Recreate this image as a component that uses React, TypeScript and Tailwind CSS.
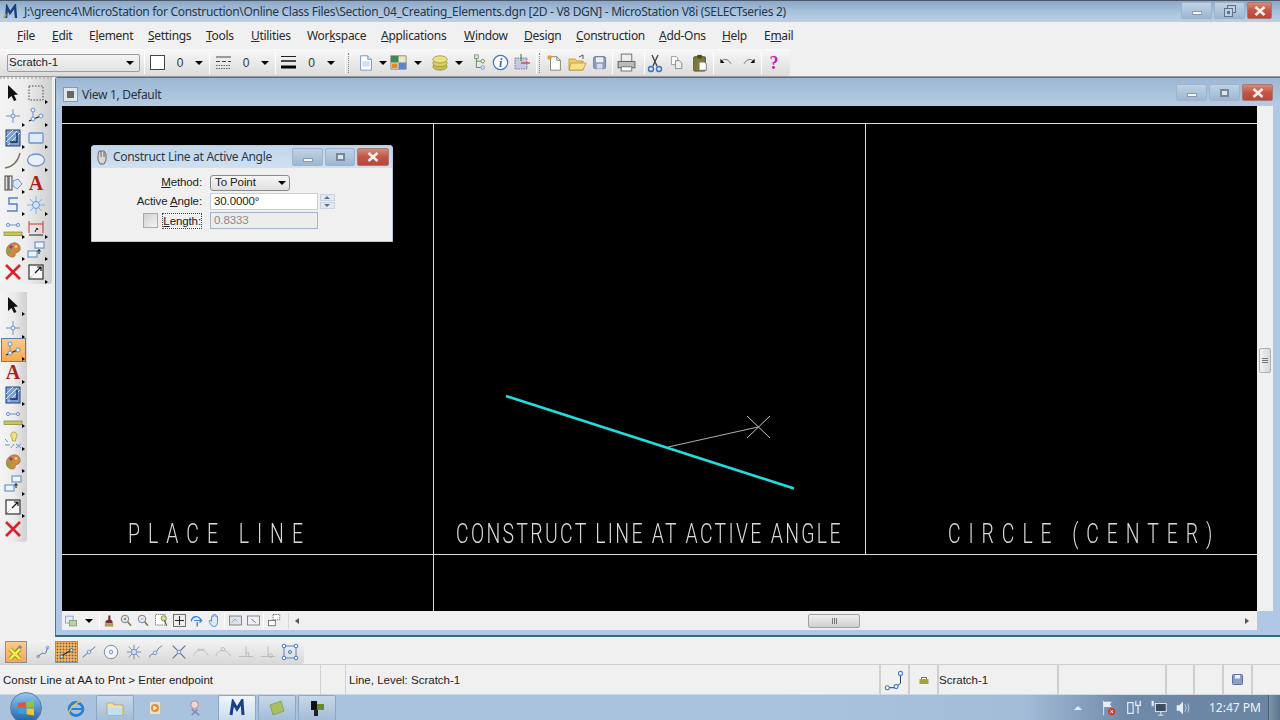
import React from "react";

const S = ({ s = 20, children }: { s?: number; children?: React.ReactNode }) => (
  <svg width={s} height={s} viewBox="0 0 20 20" fill="none" className="block shrink-0">{children}</svg>
);
const B = "#6f93c8";
const Tri = () => <span className="absolute right-0 bottom-0 w-0 h-0 border-l-[3px] border-l-black border-y-[2.5px] border-y-transparent" />;
const Down = () => <span className="w-0 h-0 border-x-[4px] border-x-transparent border-t-[4px] border-t-black" />;

const Arrow = () => <S><path d="M5 2L5 16L8.5 13L11 18L13.5 17L11 12L15 11.5Z" fill="#111" /></S>;
const Marquee = () => <S><rect x="3" y="3" width="14" height="14" stroke="#444" strokeDasharray="1.5 1.5" /></S>;
const Cross = () => <S><path d="M10 3V17M3 10H17" stroke={B} /><circle cx="10" cy="10" r="2" fill="#e6effa" stroke={B} /></S>;
const PlaceLine = () => <S><path d="M3 15L17 9" stroke="#222" strokeWidth="1.3" /><path d="M7 5V13" stroke={B} /><circle cx="7" cy="4" r="2" fill="#e8f0fa" stroke={B} /><circle cx="7" cy="13" r="2" fill="#e8f0fa" stroke={B} /><circle cx="15" cy="10" r="2" fill="#e8f0fa" stroke={B} /></S>;
const Hatch = () => <S><rect x="3" y="2" width="14" height="16" fill="#7aa0d4" stroke="#22407a" /><path d="M3 9L10 2M3 14L14 3M5 17L17 5" stroke="#dbe8f8" /><path d="M7 14H14V5" stroke="#15264a" strokeWidth="1.3" /></S>;
const RectI = () => <S><rect x="3" y="5" width="14" height="10" rx="1" fill="#dfeafa" stroke={B} strokeWidth="1.3" /></S>;
const ArcI = () => <S><path d="M2 18Q14 16 17 3" stroke="#7a6f5c" strokeWidth="1.3" /></S>;
const EllI = () => <S><ellipse cx="10" cy="10" rx="8.5" ry="6" fill="#e8f0fb" stroke={B} strokeWidth="1.3" /></S>;
const CellI = () => <S><rect x="2" y="3" width="3" height="14" fill="#ddd" stroke="#444" /><rect x="6" y="3" width="3" height="14" fill="#eee" stroke="#444" /><path d="M10 8L15 6L19 11L14 16L10 13Z" fill="#dbe8f8" stroke={B} /></S>;
const AI = () => <svg width="20" height="20" viewBox="0 0 20 20" className="block shrink-0"><text x="10" y="17" textAnchor="middle" fontFamily="Liberation Serif" fontWeight="700" fontSize="20" fill="#ab1f22">A</text></svg>;
const CurveI = () => <S><path d="M15 3H6V9H14V16H4" stroke="#4d82c4" strokeWidth="1.4" /></S>;
const Star = () => <S><path d="M10 1V19M1 10H19M4 4L16 16M16 4L4 16" stroke="#7fb4ea" /><circle cx="10" cy="10" r="3.5" fill="#cfe4fb" stroke={B} /></S>;
const Measure = () => <S><circle cx="5" cy="7" r="1.6" stroke={B} /><circle cx="15" cy="7" r="1.6" stroke={B} /><path d="M7 7H13" stroke={B} /><rect x="1" y="14" width="18" height="3.5" fill="#c9c65a" stroke="#77742a" strokeWidth=".6" /></S>;
const Dim = () => <S><path d="M3 3V15M17 3V15M3 6H17" stroke="#c33" /><path d="M3 17H17" stroke="#222" /><path d="M9 14L11 10L12 12" stroke="#111" /></S>;
const Palette = () => <S><path d="M10 3C15 2 18 6 17 10C16 13 12 12 12 14C13 17 9 18 6 16C2 14 2 5 10 3Z" fill="#d3883c" stroke="#8a5a22" strokeWidth=".6" /><circle cx="8" cy="7" r="1.7" fill="#7a4a9a" /><circle cx="6.5" cy="12" r="2" fill="#6fb13f" /><circle cx="13" cy="6.5" r="1.3" fill="#f2d9a0" /></S>;
const Windows = () => <S><rect x="9" y="2" width="9" height="6" fill="#eef4fc" stroke={B} strokeWidth="1.2" /><rect x="2" y="11" width="9" height="6" fill="#eef4fc" stroke={B} strokeWidth="1.2" /><path d="M13 14V10M11.5 11.5L13 9.5L14.5 11.5" stroke="#111" /></S>;
const RedX = () => <S><path d="M3 3L17 17M17 3L3 17" stroke="#d6222c" strokeWidth="2.6" /></S>;
const Fit = () => <S><rect x="3" y="3" width="14" height="14" fill="#f8f8f8" stroke="#333" strokeWidth="1.2" /><path d="M4 16L8 12" stroke="#6f93c8" strokeDasharray="1 1" /><path d="M9 11L15 5M11 5H15V9" stroke="#111" strokeWidth="1.2" /></S>;
const Lamp = () => <S><path d="M10 2a3.5 3.5 0 0 1 3 6L12.500 11H9.500L9 8A3.500 3.500 0 0 1 10 2Z" fill="#f2e27a" stroke="#9a8a30" strokeWidth=".7" /><path d="M2 9L5 12M2 15H7M8 18L11 14M13 14L18 18M18 14L13 18" stroke={B} /></S>;

const Tool = ({ children, tri = true, active = false }: { children: React.ReactNode; tri?: boolean; active?: boolean }) => (
  <div className={"relative w-[23px] h-[22.400px] flex items-center justify-center " + (active ? "bg-gradient-to-b from-[#fcc98a] to-[#f6a94e] outline outline-1 outline-[#5c7ea8]" : "")}>
    {children}
    {tri && <Tri />}
  </div>
);

const WinBtn = ({ kind, w, h, restore }: { kind: "min" | "max" | "close"; w: string; h: string; restore?: boolean }) => (
  <div className={`${w} ${h} rounded-[2px] flex items-center justify-center border ${kind === "close" ? "border-[#a87a72] bg-gradient-to-b from-[#d58a7a] via-[#c25546] to-[#b8483a]" : "border-[#9fb4ca] bg-gradient-to-b from-[#c0d2e5] via-[#aec5dc] to-[#9db7d2]"}`}>
    {kind === "min" && <span className="w-[10px] h-[4px] mt-[5px] bg-[#f4f6f9] border border-[#8c9bac]" />}
    {kind === "close" && <svg width="12" height="10" viewBox="0 0 12 10"><path d="M1.500 1L10.500 9M10.500 1L1.500 9" stroke="#f5eeea" strokeWidth="2.600" /></svg>}
    {kind === "max" && !restore && <span className="w-[9px] h-[8px] border-2 border-[#76879a] bg-[#dbe6f1]" />}
    {kind === "max" && restore && <svg width="12" height="12" viewBox="0 0 12 12"><rect x="3.500" y=".5" width="8" height="7" fill="#bdd0e3" stroke="#5f7388" /><rect x=".5" y="3.500" width="8" height="8" fill="#bdd0e3" stroke="#5f7388" /><rect x="3" y="6" width="3" height="3" fill="#5f7388" /></svg>}
  </div>
);

const menu: [React.ReactNode, string][] = [
  [<><u>F</u>ile</>, "w-[35px]"],
  [<><u>E</u>dit</>, "w-[37px]"],
  [<>E<u>l</u>ement</>, "w-[59px]"],
  [<><u>S</u>ettings</>, "w-[58px]"],
  [<><u>T</u>ools</>, "w-[45px]"],
  [<><u>U</u>tilities</>, "w-[56px]"],
  [<>Wor<u>k</u>space</>, "w-[74px]"],
  [<><u>A</u>pplications</>, "w-[83px]"],
  [<><u>W</u>indow</>, "w-[60px]"],
  [<><u>D</u>esign</>, "w-[52px]"],
  [<><u>C</u>onstruction</>, "w-[83px]"],
  [<><u>A</u>dd-Ons</>, "w-[63px]"],
  [<><u>H</u>elp</>, "w-[42px]"],
  [<>E<u>m</u>ail</>, "w-[40px]"],
];

const Sep = ({ cls = "" }: { cls?: string }) => <span className={"w-px h-[22px] bg-[#c4c4c4] border-r border-white shrink-0 " + cls} />;
const Zero = ({ w }: { w: string }) => <span className={`${w} text-center text-[12px] text-[#333] font-['Liberation_Sans',sans-serif]`}>0</span>;

const Bar = ({ cls, children }: { cls: string; children?: React.ReactNode }) => (
  <div className={`${cls} flex items-center justify-center shrink-0`}>{children}</div>
);

const DocI = () => <S s={18}><path d="M4 2H12L16 6V18H4Z" fill="#fff" stroke="#6f8fc0" /><path d="M12 2V6H16" stroke="#6f8fc0" fill="#dbe8f8" /><rect x="6" y="8" width="8" height="6" fill="#cfe0f6" /></S>;
const ModelI = () => <S s={19}><rect x="2" y="3" width="16" height="14" fill="#e9e5c8" stroke="#666" strokeWidth=".7" /><rect x="2" y="3" width="8" height="7" fill="#3f8a50" /><rect x="10" y="10" width="8" height="7" fill="#5b86c8" /><rect x="3" y="11" width="6" height="5" fill="#e08a2e" /></S>;
const Layers = () => <S s={18}><ellipse cx="10" cy="14" rx="8" ry="4" fill="#c9bd4c" stroke="#8d8230" strokeWidth=".7" /><ellipse cx="10" cy="10" rx="8" ry="4" fill="#dcd066" stroke="#8d8230" strokeWidth=".7" /><ellipse cx="10" cy="6" rx="8" ry="4" fill="#ebe184" stroke="#8d8230" strokeWidth=".7" /></S>;
const Tree = () => <S s={18}><path d="M6 3V15H12M6 8H12" stroke="#5a7a5a" /><rect x="4" y="1" width="4" height="4" fill="#dce8c8" stroke="#5a7a5a" strokeWidth=".7" /><circle cx="13" cy="8" r="2" fill="#e8f0d0" stroke="#6c8c4c" /><circle cx="13" cy="15" r="2" fill="#d6e4f6" stroke={B} /></S>;
const Info = () => <svg width="17" height="17" viewBox="0 0 19 19" className="block shrink-0"><circle cx="9.500" cy="9.500" r="8" fill="#fff" stroke="#3f74cf" strokeWidth="1.400" /><text x="9.500" y="14" textAnchor="middle" fontFamily="Liberation Serif" fontStyle="italic" fontWeight="700" fontSize="13" fill="#2a62c8">i</text></svg>;
const Aim = () => <S s={20}><rect x="4" y="5" width="12" height="11" fill="#c5c8e0" stroke="#77799c" strokeDasharray="1.500 1" /><path d="M10 1V8" stroke="#2fa04a" strokeWidth="1.200" /><path d="M10 10H19" stroke="#d42c2c" strokeWidth="1.200" /></S>;
const NewI = () => <S s={18}><path d="M5 3H12L16 7V18H5Z" fill="#fff" stroke="#7a7a6c" /><path d="M12 3V7H16" stroke="#7a7a6c" /><circle cx="4" cy="4" r="2.500" fill="#e89a3c" /></S>;
const Folder = () => <S s={20}><path d="M2 6H8L10 8H16V17H2Z" fill="#f1cd5c" stroke="#b08a26" strokeWidth=".7" /><path d="M4 10H19L16 17H2Z" fill="#f8e08a" stroke="#b08a26" strokeWidth=".7" /><path d="M12 4L16 2V6" stroke="#555" /></S>;
const Save = () => <S s={16}><rect x="2" y="2" width="15" height="15" rx="2" fill="#8d9dc4" stroke="#5f6f98" /><rect x="5" y="3" width="9" height="6" fill="#eef1f8" /><rect x="6" y="11" width="7" height="6" fill="#d6dbe8" /></S>;
const Printer = () => <S s={21}><rect x="5" y="2" width="10" height="7" fill="#eee" stroke="#777" /><path d="M2 9H18V15H2Z" fill="#bbb" stroke="#666" /><path d="M5 14H15V18H5Z" fill="#fff" stroke="#777" /></S>;
const Scissors = () => <S s={20}><path d="M7 2L12 13M13 2L8 13" stroke="#3e3e3e" strokeWidth="1.300" /><circle cx="6" cy="16" r="2.500" stroke="#3f6fc0" strokeWidth="1.400" /><circle cx="14" cy="16" r="2.500" stroke="#3f6fc0" strokeWidth="1.400" /></S>;
const Copy = () => <S s={16}><path d="M3 2H9L11 4V12H3Z" fill="#fff" stroke="#888" /><path d="M8 7H13L16 10V17H8Z" fill="#eee" stroke="#777" /></S>;
const Paste = () => <S s={18}><rect x="3" y="3" width="13" height="16" rx="1" fill="#7d7a3a" stroke="#50501e" /><rect x="7" y="1" width="5" height="4" fill="#4a4a22" /><path d="M9 9H15L17 11V18H9Z" fill="#fff" stroke="#777" /></S>;
const Undo = () => <S s={14}><path d="M3 8C7 3 13 4 17 11" stroke="#666" strokeWidth="1.300" /><path d="M2 4V10H8Z" fill="#111" /></S>;
const Redo = () => <S s={14}><path d="M17 8C13 3 7 4 3 11" stroke="#666" strokeWidth="1.300" /><path d="M18 4V10H12Z" fill="#111" /></S>;

const viewTools = [
  <S s={14} key="a"><path d="M9 2L12 2L12 8L15 10V13H5V10L9 8Z" fill="#7a2a3a" /><rect x="4" y="13" width="12" height="5" fill="#b59a5a" /></S>,
  <S s={15} key="b"><circle cx="8" cy="8" r="5" fill="#dce8d8" stroke="#6a7f9a" strokeWidth="1.300" /><path d="M11.500 11.500L16 17" stroke="#8a6a30" strokeWidth="2" /><circle cx="8" cy="8" r="1.500" fill="#c66" /></S>,
  <S s={15} key="c"><circle cx="8" cy="8" r="5" fill="#e8eef2" stroke="#6a7f9a" strokeWidth="1.300" /><path d="M11.500 11.500L16 17" stroke="#8a6a30" strokeWidth="2" /><path d="M6 8H10" stroke="#c66" /></S>,
  <S s={15} key="d"><rect x="2" y="2" width="13" height="14" fill="#fff" stroke="#555" strokeDasharray="2 1" /><circle cx="13" cy="7" r="3.500" fill="#dcd6a0" stroke="#6a7f3a" /><path d="M14 10L17 17" stroke="#6a5a30" strokeWidth="1.500" /></S>,
  <S s={15} key="e"><rect x="2" y="2" width="16" height="16" fill="#eee" stroke="#555" strokeWidth="1.100" /><path d="M10 4V16M4 10H16" stroke="#222" strokeWidth="1.300" /></S>,
  <S s={15} key="f"><path d="M3 11C4 4 12 3 15 8" stroke="#2f86d8" strokeWidth="1.800" /><path d="M7 10H17M14 7L17 10L14 13" stroke="#2f86d8" strokeWidth="1.600" /><path d="M11 12V18" stroke="#2f86d8" strokeWidth="1.800" /></S>,
  <S s={15} key="g"><path d="M6 11V5a1 1 0 0 1 2 0V3a1 1 0 0 1 2 0V3a1 1 0 0 1 2 0V5a1 1 0 0 1 2 0V13C14 17 11 18 9 18C6 18 4 14 3 11C3 9 5 9 6 11Z" fill="#dceafa" stroke="#2f6fc4" /></S>,
];

const snapIcons = [
  <S s={18} key="1"><path d="M3 15L7 12C9 10 10 13 12 11L14 5" stroke="#5a6f9a" strokeWidth="1.100" /><circle cx="3.500" cy="15" r="1.500" stroke={B} /><circle cx="14" cy="5" r="1.500" stroke={B} /></S>,
  null,
  <S s={18} key="3"><path d="M3 16L17 4" stroke="#5a6f9a" strokeWidth="1.100" /><circle cx="10" cy="10" r="2" fill="#dfeafa" stroke={B} /></S>,
  <S s={18} key="4"><circle cx="10" cy="10" r="7.500" fill="#f4f4f4" stroke="#6f7f9c" /><circle cx="10" cy="10" r="2" fill="#dfeafa" stroke={B} /></S>,
  <S s={18} key="5"><path d="M10 2V18M2 10H18M4 4L16 16M16 4L4 16" stroke="#7d8898" /><circle cx="10" cy="10" r="3" fill="#cfe0f5" stroke={B} /></S>,
  <S s={18} key="6"><path d="M3 16C3 11 8 14 11 9C12 6 15 4 17 3" stroke="#6a7a96" strokeWidth="1.100" /><circle cx="9" cy="11" r="2" fill="#dfeafa" stroke={B} /></S>,
  <S s={18} key="7"><path d="M3 3L17 17M17 3L3 17" stroke="#5a6f8a" strokeWidth="1.200" /><circle cx="10" cy="10" r="2" fill="#dfeafa" stroke={B} /></S>,
  <S s={18} key="8"><path d="M2 14C4 6 15 6 18 14" stroke="#b4b8bc" /><path d="M6 7H14" stroke="#b4b8bc" /></S>,
  <S s={18} key="9"><path d="M2 15C4 6 15 6 18 15" stroke="#b4b8bc" /><circle cx="10" cy="7" r="2" stroke="#b4b8bc" /></S>,
  <S s={18} key="10"><path d="M10 4V15M2 15H18" stroke="#b4b8bc" /><path d="M10 11H13V15" stroke="#b4b8bc" /></S>,
  <S s={18} key="11"><path d="M10 4V15M2 15H18" stroke="#b4b8bc" /><circle cx="13" cy="14" r="2" stroke="#b4b8bc" /></S>,
  <S s={20} key="12"><rect x="4" y="4" width="12" height="12" stroke="#5a84c0" /><circle cx="4" cy="4" r="1.800" fill="#fff" stroke="#3f78c4" /><circle cx="16" cy="4" r="1.800" fill="#fff" stroke="#3f78c4" /><circle cx="4" cy="16" r="1.800" fill="#fff" stroke="#3f78c4" /><circle cx="16" cy="16" r="1.800" fill="#fff" stroke="#3f78c4" /><circle cx="10" cy="10" r="1.500" stroke="#3f78c4" /></S>,
];

const Caption = ({ x, y, w, children }: { x: number; y: number; w: number; children: string }) => (
  <text x={x} y={y} textLength={w} lengthAdjust="spacing" fontFamily="Roboto" fontWeight="300" fontSize="27" fill="#dcdcdc" transform={`translate(${x} ${y}) scale(.72 1) translate(${-x} ${-y})`}>{children}</text>
);

const TaskBtn = ({ active, children }: { active?: boolean; children: React.ReactNode }) => (
  <div className={`w-[38px] h-[26px] shrink-0 flex items-center justify-center rounded-[2px] border border-[#8ba6c2] ${active ? "bg-gradient-to-b from-[#eff5fb] to-[#cbdced]" : "bg-gradient-to-b from-[#c6d8ea] to-[#a3bdd8]"}`}>{children}</div>
);

export default function App() {
  return (
    <div className="w-[1280px] h-[720px] overflow-hidden flex flex-col bg-[#f0f0f0] font-['Noto_Sans',sans-serif] text-[#222]">
      {/* title bar */}
      <div className="h-[22px] shrink-0 flex items-center bg-gradient-to-b from-[#8da8c6] via-[#a8c2dd] to-[#bad0e7] border-t border-[#4a5a6c] pl-[3px] pr-[8px]">
        <svg width="18" height="16" viewBox="0 0 18 16" className="shrink-0"><path d="M3 14L4 3L7 9L12 2L13 14" stroke="#1c3f7a" strokeWidth="2.400" fill="none" /><path d="M1 14L3 10" stroke="#b8a030" strokeWidth="2" /></svg>
        <span className="ml-[3px] text-[12px] tracking-[-0.31px] leading-none text-[#263647] whitespace-nowrap">J:\greenc4\MicroStation for Construction\Online Class Files\Section_04_Creating_Elements.dgn [2D - V8 DGN] - MicroStation V8i (SELECTseries 2)</span>
        <div className="ml-auto flex items-center gap-[2px] pb-[2px]">
          <WinBtn kind="min" w="w-[31px]" h="h-[17px]" />
          <WinBtn kind="max" restore w="w-[31px]" h="h-[17px]" />
          <WinBtn kind="close" w="w-[25px]" h="h-[17px]" />
        </div>
      </div>
      {/* menu */}
      <div className="h-[27px] shrink-0 flex items-center pl-[17px] text-[12px] tracking-[-0.3px] text-[#2a2a2a]">
        {menu.map(([t, w], i) => <span key={i} className={`${w} shrink-0 whitespace-nowrap`}>{t}</span>)}
      </div>
      {/* toolbar */}
      <div className="h-[28px] shrink-0 border-b border-[#9a9a9a]">
        <div className="w-[790px] h-[27px] flex items-center pl-[7px] bg-gradient-to-b from-[#f8f8f8] to-[#dcdcdc] rounded-br-[3px]">
          <div className="w-[133px] h-[18px] shrink-0 flex items-center justify-between px-[1px] pr-[5px] bg-gradient-to-b from-[#f4f4f4] to-[#e2e2e2] border border-[#9c9c9c] rounded-[2px] text-[11.500px] font-['Liberation_Sans',sans-serif]"><span>Scratch-1</span><Down /></div>
          <Sep cls="ml-[4px]" />
          <span className="ml-[5px] w-[15px] h-[15px] shrink-0 bg-white border border-[#444]" />
          <Zero w="w-[30px]" />
          <Down />
          <Sep cls="ml-[6px]" />
          <Bar cls="w-[16px] ml-[5px]"><svg width="15" height="15" viewBox="0 0 15 15"><path d="M0 2H15M0 6.500H4M6 6.500H10M12 6.500H15" stroke="#444" /><path d="M0 10.500H15M0 13.500H15" stroke="#666" strokeDasharray="1.500 1" /></svg></Bar>
          <Zero w="w-[30px]" />
          <Down />
          <Sep cls="ml-[6px]" />
          <Bar cls="w-[15px] ml-[5px]"><svg width="15" height="15" viewBox="0 0 15 15"><path d="M0 1.500H15" stroke="#222" /><path d="M0 6H15" stroke="#111" strokeWidth="1.500" /><path d="M0 12H15" stroke="#000" strokeWidth="3" /></svg></Bar>
          <Zero w="w-[31px]" />
          <Down />
          <Sep cls="ml-[10px]" />
          <span className="ml-[2px] h-[20px] w-0 border-l border-dotted border-[#888]" />
          <Bar cls="w-[24px] ml-[5px]"><DocI /></Bar>
          <Bar cls="w-[9px]"><Down /></Bar>
          <Bar cls="w-[22px]"><ModelI /></Bar>
          <Bar cls="w-[10px] ml-[4px] mr-[5px]"><Down /></Bar>
          <Bar cls="w-[24px]"><Layers /></Bar>
          <Bar cls="w-[10px] ml-[2px] mr-[4px]"><Down /></Bar>
          <Bar cls="w-[22px] ml-[1px]"><Tree /></Bar>
          <Bar cls="w-[19px]"><Info /></Bar>
          <Bar cls="w-[21px]"><Aim /></Bar>
          <Sep cls="ml-[5px]" />
          <span className="ml-[2px] h-[20px] w-0 border-l border-dotted border-[#888]" />
          <Bar cls="w-[22px] ml-[4px]"><NewI /></Bar>
          <Bar cls="w-[22px]"><Folder /></Bar>
          <Bar cls="w-[23px]"><Save /></Bar>
          <Sep cls="ml-[1px]" />
          <Bar cls="w-[25px] ml-[1px]"><Printer /></Bar>
          <Sep cls="ml-[5px]" />
          <Bar cls="w-[20px]"><Scissors /></Bar>
          <Bar cls="w-[23px]"><Copy /></Bar>
          <Bar cls="w-[23px]"><Paste /></Bar>
          <Sep cls="ml-[2px]" />
          <Bar cls="w-[23px]"><Undo /></Bar>
          <Bar cls="w-[23px]"><Redo /></Bar>
          <Sep cls="ml-[1px]" />
          <Bar cls="w-[24px]"><span className="text-[18px] font-bold leading-none text-[#c41fb8] font-['Liberation_Serif',serif]">?</span></Bar>
        </div>
      </div>
      {/* main */}
      <div className="h-[563px] shrink-0 flex">
        <div className="w-[55px] shrink-0 flex flex-col">
          <div className="w-[52px] h-[207px] pt-[3px] pl-[1.500px] bg-gradient-to-r from-[#f4f4f4] via-[#ececec] to-[#cfcfcf] rounded-br-[3px] border-t-2 border-dotted border-t-[#c0c0c0]">
            <div className="grid grid-cols-[23px_23px]">
              <Tool tri={false}><Arrow /></Tool><Tool><Marquee /></Tool>
              <Tool><Cross /></Tool><Tool><PlaceLine /></Tool>
              <Tool><Hatch /></Tool><Tool><RectI /></Tool>
              <Tool><ArcI /></Tool><Tool><EllI /></Tool>
              <Tool><CellI /></Tool><Tool tri={false}><AI /></Tool>
              <Tool><CurveI /></Tool><Tool><Star /></Tool>
              <Tool><Measure /></Tool><Tool><Dim /></Tool>
              <Tool><Palette /></Tool><Tool><Windows /></Tool>
              <Tool tri={false}><RedX /></Tool><Tool><Fit /></Tool>
            </div>
          </div>
          <div className="w-[27px] h-[250px] mt-[8px] pt-[2px] pl-[1.500px] bg-gradient-to-r from-[#f4f4f4] via-[#ececec] to-[#cfcfcf] rounded-br-[3px]">
            <Tool><Arrow /></Tool>
            <Tool><Cross /></Tool>
            <Tool active><PlaceLine /></Tool>
            <Tool><AI /></Tool>
            <Tool><Hatch /></Tool>
            <Tool><Measure /></Tool>
            <Tool><Lamp /></Tool>
            <Tool><Palette /></Tool>
            <Tool><Windows /></Tool>
            <Tool><Fit /></Tool>
            <Tool tri={false}><RedX /></Tool>
          </div>
        </div>
        {/* view window */}
        <div className="flex-1 h-[560px] flex flex-col border-l border-t border-[#5f6b78] border-b-2 border-b-[#2f6f78] rounded-tl-[3px] bg-gradient-to-b from-[#a3bcd8] to-[#b4cde9]">
          <div className="h-[28px] shrink-0 flex items-center pl-[8px] pr-[7px] pt-[5px] bg-gradient-to-b from-[#9db7d4] to-[#b5cbe2]">
            <span className="w-[13px] h-[13px] shrink-0 bg-[#666] border-[3px] border-[#dfe6ee] outline outline-1 outline-[#8a97a6]" />
            <span className="ml-[5px] text-[12px] tracking-[-0.3px] leading-none text-[#26333f]">View 1, Default</span>
            <div className="ml-auto flex items-center gap-[2px] pb-[4px]">
              <WinBtn kind="min" w="w-[31px]" h="h-[17px]" />
              <WinBtn kind="max" w="w-[31px]" h="h-[17px]" />
              <WinBtn kind="close" w="w-[31px]" h="h-[17px]" />
            </div>
          </div>
          <div className="flex-1 flex flex-col pl-[6px] pr-[7px] pb-[5px] bg-[#aec8e5]">
            <div className="h-[505px] shrink-0 flex">
              <div className="relative w-[1195px] h-[505px] bg-black overflow-hidden shrink-0">
                <svg width="1195" height="505" viewBox="62 106 1195 505" className="absolute inset-0">
                  <path d="M62 123.500H1257M62 554.500H1257M433.500 123V611M865.500 123V554" stroke="#dcdcdc" strokeWidth="1" />
                  <path d="M506 396L794 488.500" stroke="#1fdede" strokeWidth="2.600" />
                  <path d="M668 447L758 427" stroke="#a8a8a8" strokeWidth="1.200" />
                  <path d="M747 416L770 438M770 416L747 438" stroke="#c8c8c8" strokeWidth="1" />
                  <g className="opacity-[.99]">
                    <Caption x={128} y={543} w={243}>PLACE LINE</Caption>
                    <Caption x={456} y={543} w={534}>CONSTRUCT LINE AT ACTIVE ANGLE</Caption>
                    <Caption x={948} y={543} w={367}>CIRCLE (CENTER)</Caption>
                  </g>
                </svg>
                {/* floating dialog */}
                <div className="absolute left-[29px] top-[39px] w-[302px] h-[97px] flex flex-col bg-[#f0f0f0] border border-[#b5cbe2] rounded-t-[3px] font-['Liberation_Sans',sans-serif] text-[11.500px] tracking-[-0.1px] text-[#222]">
                  <div className="h-[22px] shrink-0 flex items-center pl-[3px] pr-[2px] bg-gradient-to-b from-[#c2d6ea] to-[#cfe0f1]">
                    <svg width="14" height="16" viewBox="0 0 14 16" className="shrink-0"><path d="M4 2H9L11 5V11L9 15H5L3 11V6Z" fill="#d8d8d8" stroke="#666" /><path d="M6 2V8M9 3V8" stroke="#666" /></svg>
                    <span className="ml-[4px] text-[12px] tracking-[-0.3px] leading-none font-['Noto_Sans',sans-serif] text-[#2b3a48]">Construct Line at Active Angle</span>
                    <div className="ml-auto flex items-center gap-[2px] pr-[1px]">
                      <WinBtn kind="min" w="w-[31px]" h="h-[18px]" />
                      <WinBtn kind="max" w="w-[30px]" h="h-[18px]" />
                      <WinBtn kind="close" w="w-[32px]" h="h-[18px]" />
                    </div>
                  </div>
                  <div className="pt-[6px] flex flex-col gap-[2px]">
                    <div className="flex items-center h-[17px]">
                      <span className="w-[110px] text-right whitespace-nowrap"><u>M</u>ethod:</span>
                      <div className="ml-[8px] w-[80px] h-[16px] flex items-center justify-between pl-[4px] pr-[3px] bg-gradient-to-b from-[#f6f6f6] to-[#e0e0e0] border border-[#8a8a8a] rounded-[3px]"><span>To Point</span><Down /></div>
                    </div>
                    <div className="flex items-center h-[17px]">
                      <span className="w-[110px] text-right whitespace-nowrap">Active <u>A</u>ngle:</span>
                      <div className="ml-[8px] w-[108px] h-[17px] flex items-center pl-[3px] bg-white border border-[#c5cfdb]">30.0000°</div>
                      <div className="ml-[1px] w-[16px] h-[16px] flex flex-col gap-[1px] items-center justify-center">
                        <span className="w-[15px] h-[7px] flex items-center justify-center bg-[#e4e9f1] border border-[#ccd3dd]"><span className="w-0 h-0 border-x-[3px] border-x-transparent border-b-[3px] border-b-[#56739a]" /></span>
                        <span className="w-[15px] h-[7px] flex items-center justify-center bg-[#e4e9f1] border border-[#ccd3dd]"><span className="w-0 h-0 border-x-[3px] border-x-transparent border-t-[3px] border-t-[#56739a]" /></span>
                      </div>
                    </div>
                    <div className="flex items-center h-[17px]">
                      <div className="w-[110px] flex items-center justify-end">
                        <span className="w-[15px] h-[15px] mr-[4px] bg-gradient-to-br from-[#d0d0d0] to-[#f4f4f4] border border-[#a8a8a8]" />
                        <span className="border border-dotted border-[#444] leading-[14px]"><u>L</u>ength:</span>
                      </div>
                      <div className="ml-[8px] w-[108px] h-[17px] flex items-center pl-[3px] bg-[#ededed] border border-[#a6b4c6] text-[#8a8a8a]">0.8333</div>
                    </div>
                  </div>
                </div>
              </div>
              <div className="w-[16px] shrink-0 flex items-center justify-center bg-[#f0f0f0] pt-[3px]">
                <div className="w-[12px] h-[25px] flex flex-col items-center justify-center gap-[1px] bg-gradient-to-r from-[#f2f2f2] to-[#d8d8d8] border border-[#b0b0b0] rounded-[2px]">
                  <span className="w-[6px] h-px bg-[#777]" /><span className="w-[6px] h-px bg-[#777]" /><span className="w-[6px] h-px bg-[#777]" />
                </div>
              </div>
            </div>
            <div className="h-[19px] shrink-0 mr-[16px] flex items-center bg-[#f0f0f0] pl-[2px]">
              <Bar cls="w-[14px]"><S s={14}><rect x="2" y="3" width="11" height="10" fill="#e8eef6" stroke="#6f8fb0" /><rect x="8" y="9" width="10" height="8" fill="#bcd2a8" stroke="#6f8f60" /></S></Bar>
              <Bar cls="w-[18px] ml-[2px]"><Down /></Bar>
              <Sep cls="!h-[16px] ml-[1px]" />
              {viewTools.map((v, i) => <Bar key={i} cls="w-[17.600px]">{v}</Bar>)}
              <Sep cls="!h-[16px] ml-[1px]" />
              <Bar cls="w-[18px] ml-[1px]"><S s={15}><rect x="2" y="4" width="16" height="12" fill="#dde3ea" stroke="#666" /><path d="M5 13L9 8L12 11" stroke="#888" /></S></Bar>
              <Bar cls="w-[18px]"><S s={15}><rect x="2" y="4" width="16" height="12" fill="#eef0f3" stroke="#666" /><path d="M7 8L13 13" stroke="#555" /></S></Bar>
              <Sep cls="!h-[16px] ml-[1px]" />
              <Bar cls="w-[21px]"><S s={15}><rect x="8" y="2" width="9" height="7" stroke="#555" strokeDasharray="2 1" fill="#fff" /><rect x="2" y="10" width="9" height="7" stroke="#555" fill="#fff" /></S></Bar>
              <span className="ml-[3px] h-[16px] w-px bg-[#d8d8d8]" />
              <Bar cls="w-[16px]"><span className="w-0 h-0 border-y-[3px] border-y-transparent border-r-[4px] border-r-[#555]" /></Bar>
              <div className="ml-[503px] w-[52px] h-[14px] shrink-0 flex items-center justify-center gap-[1px] bg-gradient-to-b from-[#f0f0f0] to-[#cfcfcf] border border-[#a0a0a0] rounded-[2px]">
                <span className="w-px h-[6px] bg-[#777]" /><span className="w-px h-[6px] bg-[#777]" /><span className="w-px h-[6px] bg-[#777]" />
              </div>
              <Bar cls="w-[16px] ml-auto mr-[2px]"><span className="w-0 h-0 border-y-[3px] border-y-transparent border-l-[4px] border-l-[#555]" /></Bar>
            </div>
          </div>
        </div>
      </div>
      {/* snap bar */}
      <div className="h-[24px] shrink-0 w-[304px] flex items-center pl-[5px] bg-gradient-to-b from-[#f3f3f3] to-[#d8d8d8] rounded-br-[3px]">
        <div className="w-[22px] h-[22px] shrink-0 flex items-center justify-center bg-gradient-to-b from-[#fbcb8e] to-[#f3a950] border border-[#8a8f98]">
          <svg width="16" height="16" viewBox="0 0 16 16"><path d="M8 8L13 2" stroke="#8a8a8a" strokeWidth="3.500" /><path d="M2 5L12 15M12 5L2 15" stroke="#8d7a20" strokeWidth="4.200" /><path d="M2 5L12 15M12 5L2 15" stroke="#f2ee4e" strokeWidth="2.800" /></svg>
        </div>
        <span className="w-[6px] shrink-0" />
        {snapIcons.map((ic, i) => ic === null ? (
          <div key={i} className="w-[22.400px] h-[22px] shrink-0 flex items-center justify-center border border-[#7f94b0] bg-[#f4b25e] bg-[radial-gradient(#6e6448_0.8px,transparent_1.1px)] bg-[length:3px_3px]">
            <svg width="18" height="18" viewBox="0 0 20 20"><path d="M3 15L16 7" stroke="#1d2a3a" strokeWidth="1.200" /><circle cx="4" cy="15" r="1.800" fill="#dfeafa" stroke="#34568a" /><circle cx="15" cy="8" r="1.800" fill="#dfeafa" stroke="#34568a" /></svg>
          </div>
        ) : <Bar key={i} cls="w-[22.400px]">{ic}</Bar>)}
      </div>
      {/* status */}
      <div className="h-[30px] shrink-0 flex items-stretch border-t border-[#cfcfcf] text-[11.500px] font-['Liberation_Sans',sans-serif] text-[#222]">
        <div className="w-[320px] flex items-center pl-[3px] pt-[2px]">Constr Line at AA to Pnt &gt; Enter endpoint</div>
        <div className="w-[25px] border-l border-[#d0d0d0]" />
        <div className="w-[534px] flex items-center pl-[3px] pt-[2px] border-l border-[#d0d0d0]">Line, Level: Scratch-1</div>
        <div className="w-[29px] flex items-center justify-center border-l-2 border-[#cfcfcf]"><S s={22}><path d="M4 17H10L15 13V5" stroke="#2a3a55" strokeWidth=".9" /><circle cx="3" cy="17" r="1.800" fill="#fff" stroke="#3f78c4" /><circle cx="11" cy="16" r="1.800" fill="#fff" stroke="#3f78c4" /><circle cx="15" cy="4" r="1.800" fill="#fff" stroke="#3f78c4" /></S></div>
        <div className="w-[29px] flex items-center justify-center border-l-2 border-[#cfcfcf]"><svg width="10" height="8" viewBox="0 0 10 8"><path d="M2.500 3V1.500H7.500V3" stroke="#77722a" fill="none" /><rect x="0.500" y="3" width="9" height="5" fill="#a8a23a" /></svg></div>
        <div className="w-[120px] flex items-center border-l-2 border-[#cfcfcf] pt-[2px]">Scratch-1</div>
        <div className="w-[108px] border-l-2 border-[#cfcfcf]" />
        <div className="w-[28px] border-l-2 border-[#cfcfcf]" />
        <div className="w-[29px] border-l-2 border-[#cfcfcf]" />
        <div className="w-[29px] flex items-center justify-center border-l-2 border-[#cfcfcf]"><svg width="11" height="11" viewBox="0 0 11 11"><rect x=".5" y=".5" width="10" height="10" rx="1" fill="#8d9dc4" stroke="#5f6f98" /><rect x="3" y="1" width="5" height="3.500" fill="#eef1f8" /></svg></div>
        <div className="flex-1 border-l-2 border-[#cfcfcf]" />
      </div>
      {/* taskbar */}
      <div className="flex-1 flex items-center bg-[linear-gradient(90deg,#a9c3de_0,#a9c3de_60%,#a3bcd8_80%,#6f8aa8_88%,#6a84a2_100%)] border-t border-[#cfd8e2]">
        <div className="w-[52px] h-[26px] shrink-0 flex items-center justify-center">
          <div className="w-[32px] h-[32px] rounded-full bg-gradient-to-b from-[#8fc8ee] to-[#1d5ea8] border border-[#5d7d9a] flex items-center justify-center">
            <svg width="18" height="16" viewBox="0 0 17 15"><path d="M1 3L8 1.500V7H1Z" fill="#e2533a" /><path d="M9 1.500L16 0.500V7H9Z" fill="#8ec63f" /><path d="M1 8H8V13.500L1 12.500Z" fill="#35a0e0" /><path d="M9 8H16V14.500L9 13.500Z" fill="#f7c62e" /></svg>
          </div>
        </div>
        <Bar cls="w-[43px] ml-[2px] mr-[-1px]"><svg width="20" height="20" viewBox="0 0 20 20"><ellipse cx="10" cy="11" rx="7" ry="6.500" fill="none" stroke="#2b7fd6" strokeWidth="2.800" /><path d="M4 11H16" stroke="#2b7fd6" strokeWidth="2" /><path d="M3 17C1 13 10 3 17 3" stroke="#e8c34a" strokeWidth="1.300" fill="none" /></svg></Bar>
        <TaskBtn><S s={20}><path d="M2 5H8L9 7H18V17H2Z" fill="#f3e29a" stroke="#b49a4a" strokeWidth=".7" /><rect x="3" y="10" width="14" height="7" fill="#bfe0ef" /></S></TaskBtn>
        <Bar cls="w-[41px]"><S s={16}><rect x="3" y="2" width="14" height="16" fill="#e4e0d4" stroke="#bbb" /><circle cx="10" cy="10" r="5" fill="#e88a2c" /><path d="M8 7L13 10L8 13Z" fill="#fff" /></S></Bar>
        <Bar cls="w-[41px] mr-[2px]"><S s={19}><circle cx="9" cy="6" r="4" fill="#f0d5d5" stroke="#b88" /><path d="M6 11L14 17M12 11L6 17" stroke="#7a8db0" strokeWidth="1.600" /></S></Bar>
        <TaskBtn active><svg width="20" height="18" viewBox="0 0 20 18"><path d="M4 16L6 3L10 10L15 2L16 16" stroke="#173f8c" strokeWidth="3" fill="none" /></svg></TaskBtn>
        <span className="w-[2px] shrink-0" />
        <TaskBtn><svg width="18" height="18" viewBox="0 0 18 18"><path d="M2 6L13 2L16 12L5 16Z" fill="#a8c060" stroke="#7c9440" strokeWidth=".7" /></svg></TaskBtn>
        <span className="w-[2px] shrink-0" />
        <TaskBtn><svg width="18" height="18" viewBox="0 0 18 18"><rect x="3" y="2" width="6" height="9" fill="#111" /><rect x="6" y="10" width="4" height="7" fill="#222" /><rect x="9" y="5" width="7" height="6" fill="#6a8a2a" /></svg></TaskBtn>
        <div className="ml-auto flex items-center h-full">
          <span className="w-0 h-0 border-x-[4px] border-x-transparent border-b-[4px] border-b-[#e6edf5]" />
          <Bar cls="w-[26px] ml-[14px]"><S s={18}><path d="M4 2V18" stroke="#e6edf5" /><path d="M4 3H13L11 6L13 9H4Z" fill="#e6edf5" /><circle cx="13" cy="14" r="4" fill="#d33a30" /><path d="M11.500 12.500L14.500 15.500M14.500 12.500L11.500 15.500" stroke="#fff" /></S></Bar>
          <Bar cls="w-[24px]"><S s={18}><rect x="3" y="4" width="6" height="12" stroke="#e6edf5" strokeWidth="1.300" /><path d="M12 2V7H17V2M14.500 7V16" stroke="#e6edf5" strokeWidth="1.400" /></S></Bar>
          <Bar cls="w-[25px]"><S s={18}><rect x="6" y="5" width="12" height="9" fill="#3c4d60" stroke="#e6edf5" /><path d="M3 2V8" stroke="#e6edf5" strokeWidth="2.500" /><path d="M12 14V18M9 18H15" stroke="#e6edf5" /></S></Bar>
          <Bar cls="w-[23px]"><S s={18}><path d="M3 7H6L10 3V17L6 13H3Z" fill="#e6edf5" /><path d="M12 6C14 8 14 12 12 14M15 5C17 8 17 12 15 15" stroke="#c8d4e2" /></S></Bar>
          <span className="ml-[15px] w-[48px] text-[12px] whitespace-nowrap text-[#f0f4f8] font-['Noto_Sans',sans-serif]">12:47 PM</span>
          <div className="ml-[11px] w-[12px] h-full bg-gradient-to-r from-[#7d93ab] to-[#5d7590] border-l border-[#4a5d72]" />
        </div>
      </div>
    </div>
  );
}
